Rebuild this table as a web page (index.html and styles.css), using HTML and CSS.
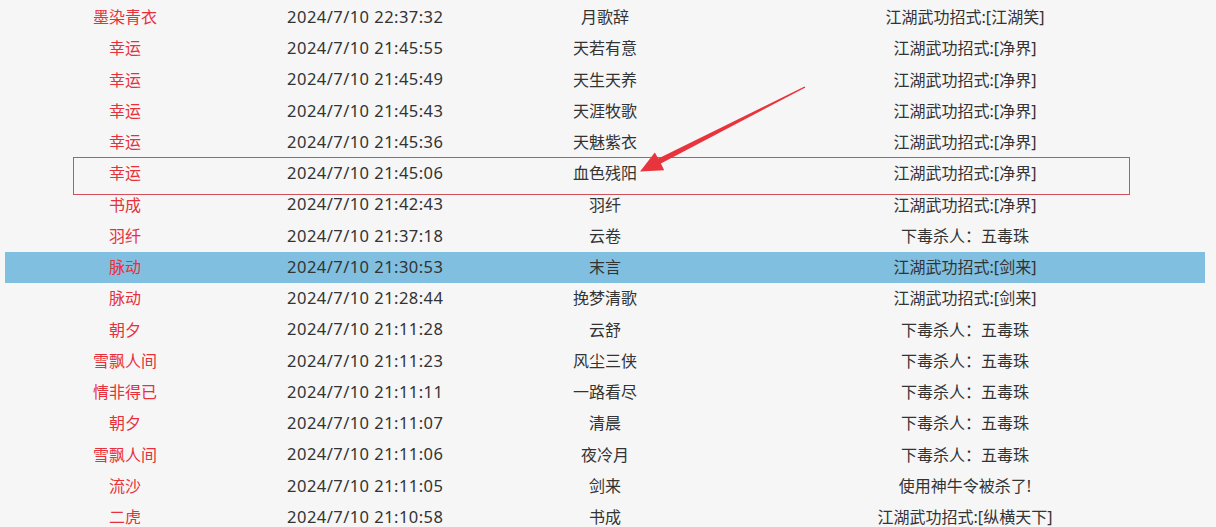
FILE: index.html
```html
<!DOCTYPE html>
<html lang="zh-CN">
<head>
<meta charset="utf-8">
<title>击杀记录</title>
<link rel="stylesheet" href="styles.css">
</head>
<body>
<div class="page">
  <div class="table">
    <div class="row"><span class="c name">墨染青衣</span><span class="c time">2024/7/10 22:37:32</span><span class="c who">月歌辞</span><span class="c how">江湖武功招式:[江湖笑]</span></div>
    <div class="row"><span class="c name">幸运</span><span class="c time">2024/7/10 21:45:55</span><span class="c who">天若有意</span><span class="c how">江湖武功招式:[净界]</span></div>
    <div class="row"><span class="c name">幸运</span><span class="c time">2024/7/10 21:45:49</span><span class="c who">天生天养</span><span class="c how">江湖武功招式:[净界]</span></div>
    <div class="row"><span class="c name">幸运</span><span class="c time">2024/7/10 21:45:43</span><span class="c who">天涯牧歌</span><span class="c how">江湖武功招式:[净界]</span></div>
    <div class="row"><span class="c name">幸运</span><span class="c time">2024/7/10 21:45:36</span><span class="c who">天魅紫衣</span><span class="c how">江湖武功招式:[净界]</span></div>
    <div class="row"><span class="c name">幸运</span><span class="c time">2024/7/10 21:45:06</span><span class="c who">血色残阳</span><span class="c how">江湖武功招式:[净界]</span></div>
    <div class="row"><span class="c name">书成</span><span class="c time">2024/7/10 21:42:43</span><span class="c who">羽纤</span><span class="c how">江湖武功招式:[净界]</span></div>
    <div class="row"><span class="c name">羽纤</span><span class="c time">2024/7/10 21:37:18</span><span class="c who">云卷</span><span class="c how">下毒杀人：五毒珠</span></div>
    <div class="row selected"><span class="c name">脉动</span><span class="c time">2024/7/10 21:30:53</span><span class="c who">末言</span><span class="c how">江湖武功招式:[剑来]</span></div>
    <div class="row"><span class="c name">脉动</span><span class="c time">2024/7/10 21:28:44</span><span class="c who">挽梦清歌</span><span class="c how">江湖武功招式:[剑来]</span></div>
    <div class="row"><span class="c name">朝夕</span><span class="c time">2024/7/10 21:11:28</span><span class="c who">云舒</span><span class="c how">下毒杀人：五毒珠</span></div>
    <div class="row"><span class="c name">雪飘人间</span><span class="c time">2024/7/10 21:11:23</span><span class="c who">风尘三侠</span><span class="c how">下毒杀人：五毒珠</span></div>
    <div class="row"><span class="c name">情非得已</span><span class="c time">2024/7/10 21:11:11</span><span class="c who">一路看尽</span><span class="c how">下毒杀人：五毒珠</span></div>
    <div class="row"><span class="c name">朝夕</span><span class="c time">2024/7/10 21:11:07</span><span class="c who">清晨</span><span class="c how">下毒杀人：五毒珠</span></div>
    <div class="row"><span class="c name">雪飘人间</span><span class="c time">2024/7/10 21:11:06</span><span class="c who">夜冷月</span><span class="c how">下毒杀人：五毒珠</span></div>
    <div class="row"><span class="c name">流沙</span><span class="c time">2024/7/10 21:11:05</span><span class="c who">剑来</span><span class="c how">使用神牛令被杀了!</span></div>
    <div class="row"><span class="c name">二虎</span><span class="c time">2024/7/10 21:10:58</span><span class="c who">书成</span><span class="c how">江湖武功招式:[纵横天下]</span></div>
  </div>
  <div class="mark-box"></div>
  <svg class="mark-arrow" width="1216" height="527" viewBox="0 0 1216 527" aria-hidden="true">
    <polygon points="805.4,87.6 660.9,163.4 664.2,170.2 640,171.5 654.8,152.4 658.3,158.5 804.6,86.4" fill="#e8343c"/>
  </svg>
</div>
</body>
</html>
```

FILE: styles.css
```css
html, body {
  margin: 0;
  padding: 0;
  background: #f6f6f6;
}

body {
  font-family: "Noto Sans", "Noto Sans CJK SC", sans-serif;
  font-size: 16px;
  color: #333333;
  overflow: hidden;
}

.page {
  position: relative;
  width: 1216px;
  height: 527px;
  overflow: hidden;
}

.table {
  display: flex;
  flex-direction: column;
  padding: 1.5px 0 0 5px;
  width: 1200px;
}

.row {
  display: flex;
  height: 31.25px;
  align-items: center;
  line-height: 1;
}

.row.selected {
  background: #80bfdf;
}

.c {
  display: block;
  text-align: center;
  white-space: nowrap;
}

.name {
  width: 240px;
  color: #e8303a;
}

.time {
  width: 240px;
  font-size: 16.5px;
  letter-spacing: 0.45px;
  text-indent: 0.45px;
}

.who {
  width: 240px;
}

.how {
  width: 480px;
}

.mark-box {
  position: absolute;
  left: 73px;
  top: 157px;
  width: 1055px;
  height: 36px;
  border: 1px solid #d2505a;
}

.mark-arrow {
  position: absolute;
  left: 0;
  top: 0;
}
```
